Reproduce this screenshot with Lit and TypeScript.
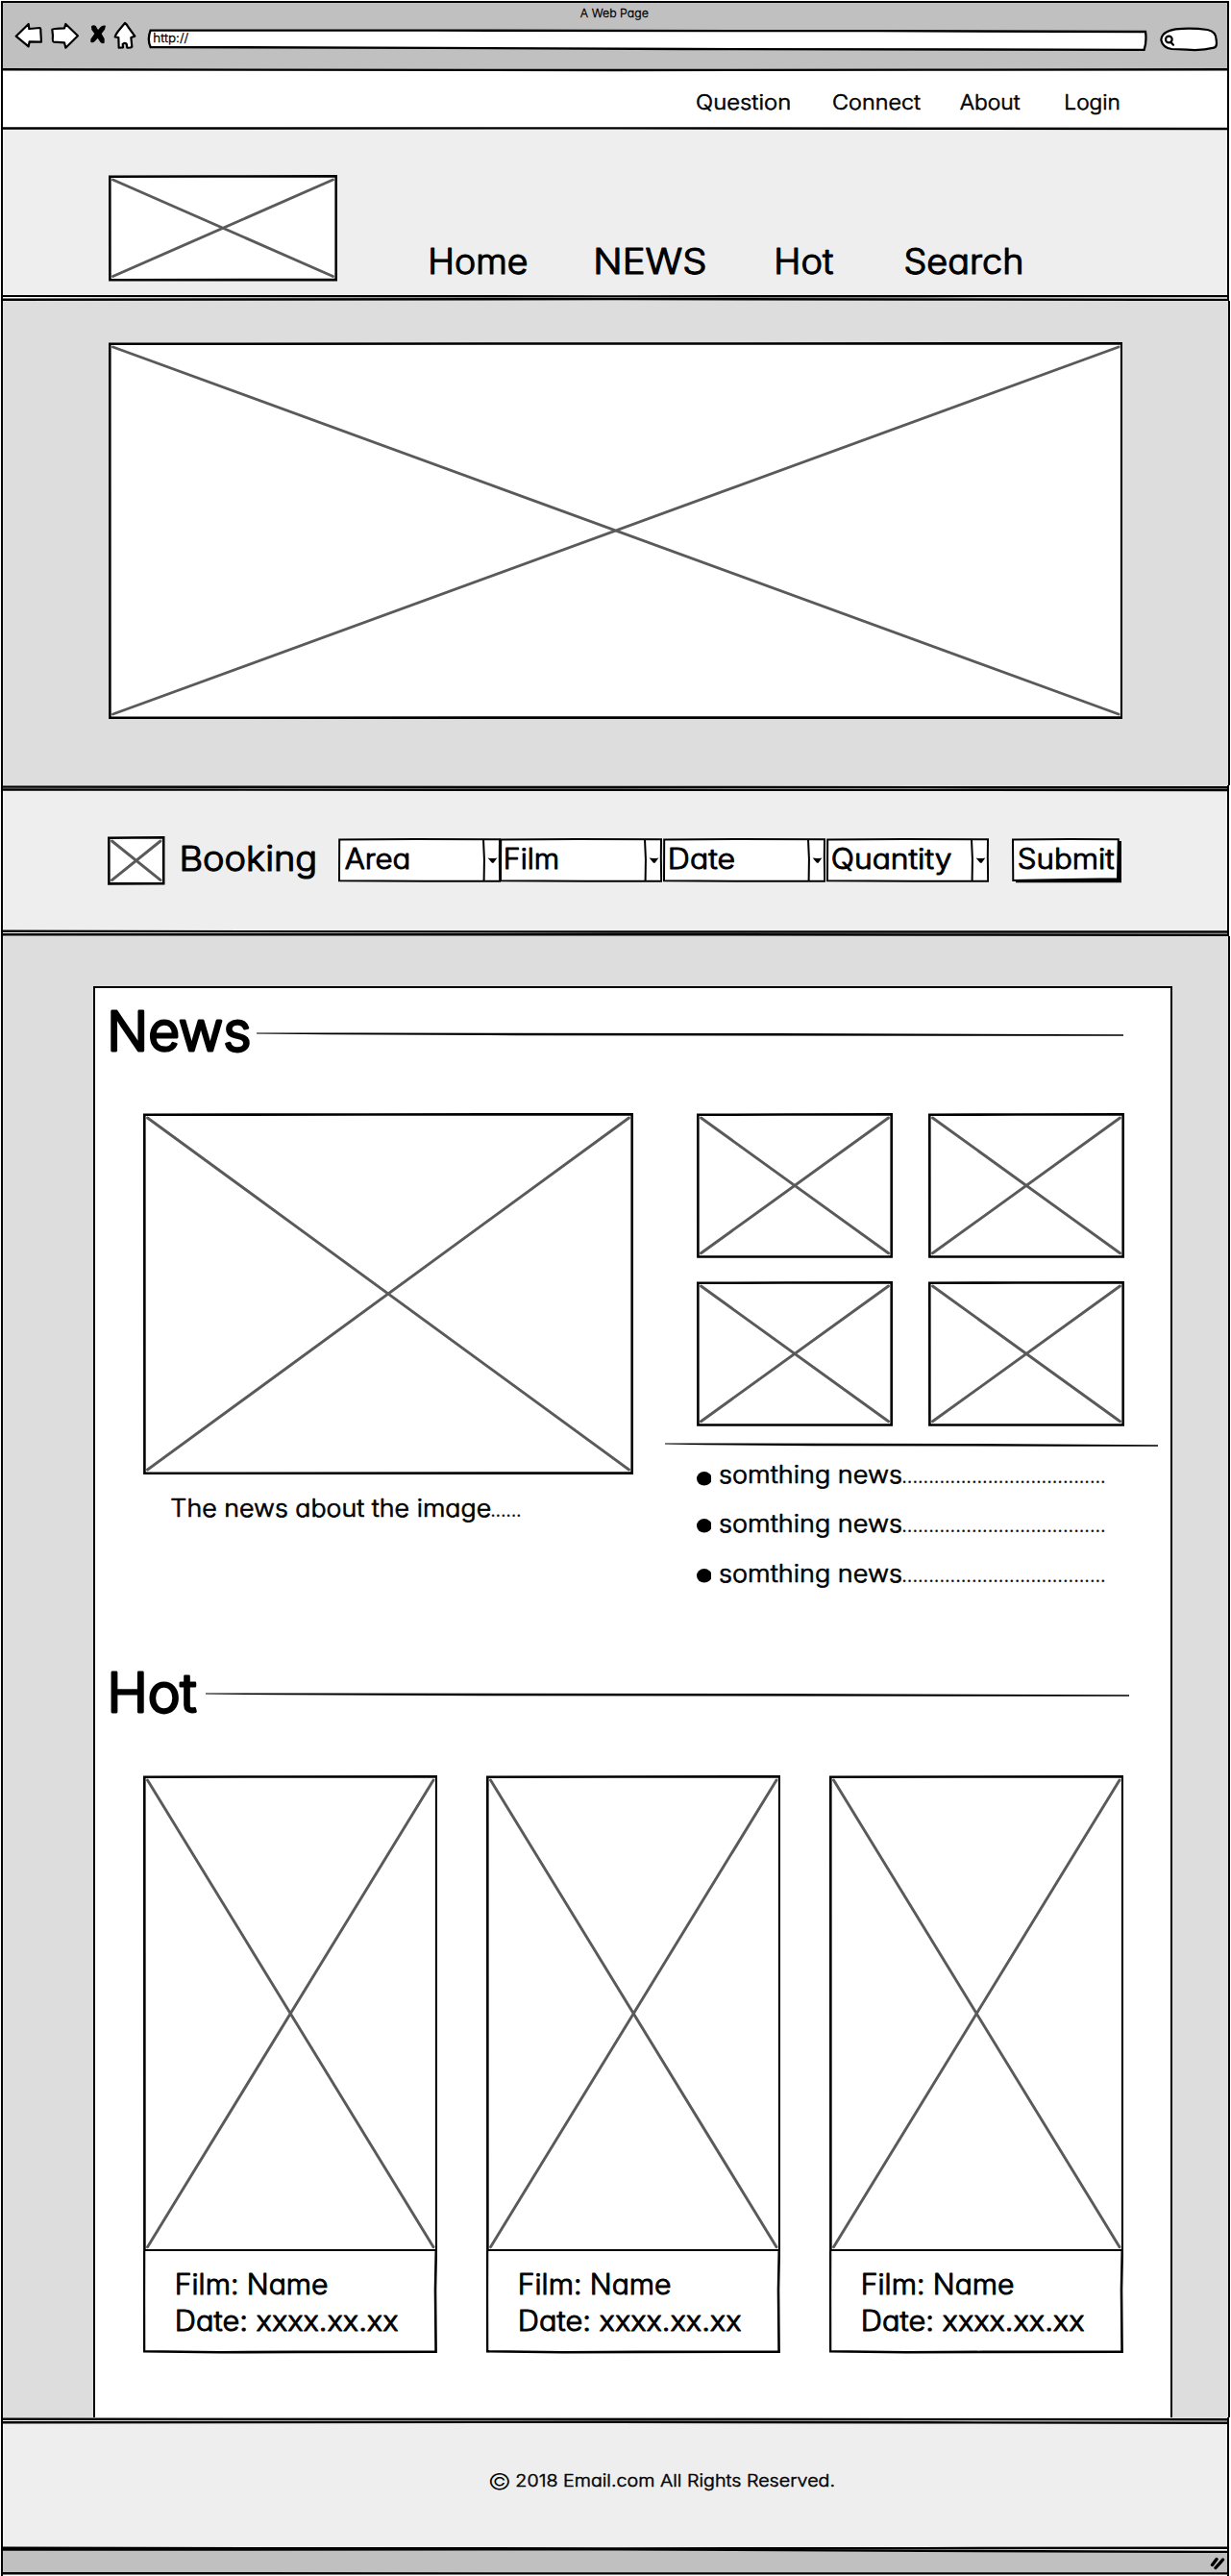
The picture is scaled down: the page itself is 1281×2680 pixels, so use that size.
import { LitElement, html, svg, css } from "lit";
import { customElement } from "lit/decorators.js";

/* Stroke added round the glyphs, as a share of the font size: heavier on larger text. */
const weightOf = (size: number) => (size > 50 ? 0.05 : size > 27 ? 0.034 : 0.028);

/* A label whose box is the ink box of its capitals: w wide, cap tall, baseline at the bottom. */
const label = (
  text: string,
  w: number,
  cap: number,
  lb = 0.08,
  rb = 0.06,
  dots = "",
  dotsWidth = 0,
) => {
  const ratio = text === "©" ? 0 : weightOf(cap / 0.755);
  const size = cap / (0.727 + ratio);
  const sw = size * ratio;
  const x = -lb * size + sw / 2;
  const len = w + (lb + rb) * size - sw;
  return html`<svg class="label" width=${w + dotsWidth} height=${cap}>
    <text
      x=${x}
      y=${cap - sw / 2}
      font-size=${size}
      stroke-width=${sw}
      textLength=${len}
      lengthAdjust="spacingAndGlyphs"
    >${text}</text>
    ${dots
      ? svg`<text x=${w} y=${cap - sw / 2} font-size=${size * 0.85} stroke-width="0.2"
          textLength=${dotsWidth} lengthAdjust="spacing">${dots}</text>`
      : null}
  </svg>`;
};

/* Crossed placeholder image with a slightly uneven hand-drawn outline. */
const photo = (w: number, h: number) => html`<svg class="photo" width=${w} height=${h}>
  <path
    class="outline"
    d="M1.3 1.8 L${w * 0.45} 1.5 L${w - 1.3} 1.3 L${w - 1.3} ${h - 1.4} L1.4 ${h - 1.3} Z"
  />
  <path class="cross" d="M4.5 5 L${w - 4.5} ${h - 5} M${w - 4.5} 5 L4.5 ${h - 5}" />
</svg>`;

/* Border between two bands: one or two strokes over the two band colours. */
const divider = (h: number, w: number, top: string, bottom: string, lines: number[][]) => {
  const last = lines[lines.length - 1][1];
  const d = (l: number[]) =>
    `M1 ${l[0]} L${w * 0.2} ${(l[0] + l[1]) / 2} L${w * 0.5} ${l[1]} L${w * 0.75} ${(l[1] + l[2]) / 2} L${w - 1} ${l[2]}`;
  return html`<svg class="divider" width=${w} height=${h}>
    <rect width=${w} height=${last} fill=${top} />
    <rect y=${last} width=${w} height=${h - last} fill=${bottom} />
    ${lines.length > 1
      ? svg`<path fill="#fff" d="${d(lines[0])} L${w - 1} ${lines[1][2]} L${w * 0.5} ${lines[1][1]} L1 ${lines[1][0]} Z" />`
      : null}
    ${lines.map((l) => svg`<path class="stroke" d=${d(l)} />`)}
    <path class="edge" d="M1 0 V${h} M${w - 1} 0 V${h}" />
  </svg>`;
};

const rule = (w: number) => html`<svg class="rule" width=${w} height="5">
  <path d="M0 0.6 L${w * 0.12} 0.6 L${w * 0.6} 1 L${w} 2.3 L${w} 3.7 L${w * 0.8} 3.8 L${w * 0.3} 3.2 L${w * 0.08} 2.3 L0 1.5 Z" />
</svg>`;

const fonts = css`
  .label {
    display: block;
    overflow: visible;
    flex: none;
  }
  .label text {
    font-family: Inter, "Open Sans", sans-serif;
    font-weight: 300;
    font-feature-settings: "cv11" 1;
    font-optical-sizing: none;
    fill: #000;
    stroke: #000;
    stroke-linejoin: round;
    white-space: pre;
  }
  svg {
    display: block;
    flex: none;
  }
  .outline {
    fill: #fff;
    stroke: #000;
    stroke-width: 2.6;
  }
  .cross {
    fill: none;
    stroke: #5a5a5a;
    stroke-width: 2.9;
    stroke-linecap: round;
  }
`;

@customElement("browser-bar")
export class BrowserBar extends LitElement {
  static styles = [
    fonts,
    css`
      :host {
        display: block;
      }
      .title {
        display: flex;
        justify-content: center;
        padding: 5.7px 2px 4.3px 0;
      }
      .bar {
        display: flex;
        height: 48px;
      }
      .ink {
        fill: #fff;
        stroke: #000;
        stroke-width: 6.6;
        stroke-linejoin: round;
        stroke-linecap: round;
      }
      .tools {
        display: flex;
        padding-left: 12px;
      }
      .fwd {
        margin-left: 6.67px;
      }
      .stop {
        margin-left: 10px;
      }
      .home {
        margin-left: 7.33px;
      }
      .address {
        margin-left: 10px;
        display: grid;
      }
      .address > * {
        grid-area: 1 / 1;
      }
      .url {
        padding: 13.3px 0 0 8.3px;
      }
      .search {
        margin-left: 12px;
      }
    `,
  ];
  render() {
    return html`
      <div class="title">${label("A Web Page", 70.3, 9, 0.03, 0.06)}</div>
      <div class="bar">
        <div class="tools">
          <svg width="30" height="30" viewBox="45 66 90 90">
            <path class="ink" d="M50 113 L89 75 L91 90 L124 87 Q128 88 127 98 L129 131 L92 130 L89 145 Z" />
          </svg>
          <svg class="fwd" width="31" height="30" viewBox="155 66 93 90">
            <path class="ink" d="M162 92 Q164 89 200 88 L204 75 L242 112 L204 149 L200 133 L167 131 Q162 130 164 112 Z" />
          </svg>
          <svg class="stop" width="18" height="30" viewBox="278 66 54 90">
            <path d="M284 82 Q291 76 298 81 L305 93 L314 83 Q320 79 329 80 L326 92 L316 105 L325 121 L325 134 Q317 138 312 131 L304 119 L295 129 Q288 136 282 131 L282 122 L294 105 L285 93 Z" />
          </svg>
          <svg class="home" width="24" height="30" viewBox="354 66 72 90">
            <path class="ink" d="M390 72 Q396 76 400 84 L421 113 L409 117 L412 146 Q408 150 397 149 L395 137 Q388 132 383 138 L384 148 L371 149 L370 117 L359 115 Q362 105 375 90 Z" />
          </svg>
        </div>
        <div class="address">
          <svg width="1042" height="32" viewBox="0 0 1042 32">
            <path
              d="M4.6 9.6 L300 9.7 L760 10.2 L1040 11 Q1041.5 21 1038.6 29.8 L560 29 L300 27.8 L4.6 27 Q1 19 4.6 9.6 Z"
              fill="#fff"
              stroke="#000"
              stroke-width="2.3"
            />
          </svg>
          <div class="url">${label("http://", 36.2, 9.4, 0.07, 0.02)}</div>
        </div>
        <svg class="search" width="64" height="30" viewBox="1038 66 192 90" overflow="visible">
          <path class="ink" d="M1045 125 Q1046 98 1090 91 Q1140 86 1190 93 Q1217 98 1217 125 Q1221 146 1210 149 Q1170 159 1125 155 L1078 153 Q1050 149 1045 125 Z" />
          <circle class="ink" cx="1069" cy="123" r="10" />
          <path class="ink" d="M1075 131 L1083 140" />
        </svg>
      </div>
    `;
  }
}

@customElement("booking-form")
export class BookingForm extends LitElement {
  static styles = [
    fonts,
    css`
      :host {
        display: flex;
        align-items: flex-start;
        padding: 46px 0 0 109.3px;
      }
      .name {
        padding: 9.8px 0 0 17.6px;
      }
      .fields {
        display: grid;
        grid-template-columns: 168.7px 169.7px 170px 169.5px;
        padding: 2px 0 0 23px;
      }
      .field {
        display: grid;
      }
      .field > * {
        grid-area: 1 / 1;
      }
      .text {
        padding: 10.3px 0 0 7.4px;
      }
      .text.wide {
        padding-left: 6px;
      }
      .line {
        fill: #fff;
        stroke: #000;
        stroke-width: 2;
      }
      .submit {
        display: grid;
        padding: 2px 0 0 23.7px;
      }
      .submit > * {
        grid-area: 1 / 1;
      }
      .caption {
        padding: 10.3px 0 0 6.3px;
      }
    `,
  ];
  private fields: [string, number, number, number][] = [
    ["Area", 66.5, 0.03, 0.08],
    ["Film", 54.6, 0.09, 0.07],
    ["Date", 67, 0.09, 0.05],
    ["Quantity", 124.3, 0.06, 0.02],
  ];
  render() {
    return html`
      ${photo(59.5, 50.7)}
      <div class="name">${label("Booking", 139.3, 27, 0.09, 0.07)}</div>
      <div class="fields">
        ${this.fields.map(
          ([t, w, lb, rb]) => html`<div class="field">
            <svg width="169" height="46">
              <path class="line" d="M1.2 1.4 L80 1 L168 1.3 L167.8 20 L168.2 44.8 L90 44.8 L1 44.2 Z" />
              <path class="line" d="M151 1.2 Q152.6 22 151.6 44.6" />
              <path d="M155.6 20.6 Q160 21.6 165.4 20.5 L161.6 25.8 L160 25.8 Z" />
            </svg>
            <div class="text ${t === "Quantity" || t === "Film" ? "wide" : ""}">
              ${label(t, w, 22.4, lb, rb)}
            </div>
          </div>`,
        )}
      </div>
      <div class="submit">
        <svg width="115" height="47">
          <path d="M4 6 L111 3 L114 3 L114 46.3 L4 46.3 Z" />
          <path class="line" d="M1 1.5 L60 1 L110.8 1.2 L110 42.2 L56 43 L1.3 44 Z" />
        </svg>
        <div class="caption">${label("Submit", 99, 22.4, 0.06, 0.04)}</div>
      </div>
    `;
  }
}

@customElement("news-section")
export class NewsSection extends LitElement {
  static styles = [
    fonts,
    css`
      :host {
        display: block;
        height: 688px;
      }
      .head {
        display: flex;
        padding: 23px 0 0 16px;
      }
      .head .rule {
        margin: 22.6px 0 0 6.7px;
      }
      .cols {
        display: flex;
        padding: 63.2px 0 0 49.5px;
      }
      .caption {
        padding: 25.5px 0 0 29.5px;
      }
      .side {
        padding-left: 33.5px;
      }
      .thumbs {
        display: grid;
        grid-template-columns: 204px 204px;
        gap: 24.3px 37.1px;
        padding-left: 32.8px;
      }
      .side .rule {
        margin-top: 17.4px;
      }
      .list {
        padding: 17.8px 0 0 32.5px;
        display: grid;
        grid-template-rows: 51px 52px 40px;
      }
      .row {
        display: flex;
        gap: 9.4px;
      }
      .bullet {
        margin-top: 7.5px;
      }
      .row + .row .bullet {
        margin-top: 5.2px;
      }
    `,
  ];
  render() {
    return html`
      <div class="head">${label("News", 145, 43.7, 0.09, 0.05)} ${rule(902.5)}</div>
      <div class="cols">
        <div>
          ${photo(510, 376)}
          <div class="caption">
            ${label("The news about the image", 332, 19.4, 0.04, 0.06, "......", 33)}
          </div>
        </div>
        <div class="side">
          <div class="thumbs">${[0, 1, 2, 3].map(() => photo(204, 150.8))}</div>
          ${rule(513.2)}
          <div class="list">
            ${[0, 1, 2].map(
              () => html`<div class="row">
                <svg class="bullet" width="15.6" height="14.6">
                  <ellipse cx="7.8" cy="7.3" rx="7.8" ry="7.3" />
                </svg>
                ${label("somthing news", 189, 19.4, 0.05, 0.05, ".".repeat(38), 213)}
              </div>`,
            )}
          </div>
        </div>
      </div>
    `;
  }
}

@customElement("hot-section")
export class HotSection extends LitElement {
  static styles = [
    fonts,
    css`
      :host {
        display: block;
      }
      .head {
        display: flex;
        padding: 22.9px 0 0 16px;
      }
      .head .rule {
        margin: 22.4px 0 0 10.4px;
      }
      .cards {
        display: flex;
        gap: 50.7px;
        padding: 64.9px 0 0 49.5px;
      }
      .info {
        display: grid;
        margin-top: -1px;
      }
      .info > * {
        grid-area: 1 / 1;
      }
      .lines {
        display: grid;
        gap: 15.9px;
        align-content: start;
        padding: 23.4px 0 0 35px;
      }
    `,
  ];
  render() {
    return html`
      <div class="head">${label("Hot", 88.8, 43.2, 0.09, 0.04)} ${rule(961)}</div>
      <div class="cards">
        ${[0, 1, 2].map(
          () => html`<div class="card">
            ${photo(306.5, 495.7)}
            <div class="info">
              <svg width="306" height="107">
                <path class="outline" d="M1 0 L0.9 50 L1 104.3 L80 105.2 L160 104.9 L304.6 104.6 L304 40 L304.8 0" />
              </svg>
              <div class="lines">
                ${label("Film: Name", 156.6, 22.4, 0.09, 0.05)}
                ${label("Date: xxxx.xx.xx", 230.4, 22.4, 0.09, 0.02)}
              </div>
            </div>
          </div>`,
        )}
      </div>
    `;
  }
}

@customElement("app-root")
export class AppRoot extends LitElement {
  static styles = [
    fonts,
    css`
      :host {
        display: block;
        width: 1281px;
        height: 2680px;
        background: #fff;
        overflow: hidden;
      }
      .divider {
        margin-left: 1px;
      }
      .divider .stroke {
        fill: none;
        stroke: #000;
        stroke-width: 2.4;
      }
      .divider .edge {
        fill: none;
        stroke: #000;
        stroke-width: 2;
      }
      .band {
        box-sizing: border-box;
        margin-left: 1px;
        border: solid #000;
        border-width: 0 2px;
        width: 1278px;
      }
      .band.wide {
        width: 1279px;
      }
      .chrome {
        height: 70px;
        margin-top: 1px;
        border-top-width: 2px;
        background: #c0c0c0;
      }
      .links {
        height: 57px;
        background: #fff;
      }
      .link-row {
        display: grid;
        grid-template-columns: 142.3px 132px 110px 56px;
        padding: 22.6px 0 0 722px;
      }
      .header {
        height: 171px;
        background: #eee;
        display: flex;
      }
      .logo {
        padding: 46.3px 0 0 109.7px;
      }
      .menu {
        display: grid;
        grid-template-columns: 172.3px 188.3px 134px 122px;
        padding: 122.2px 0 0 97px;
        align-content: start;
      }
      .hero {
        height: 504px;
        background: #ddd;
        padding: 43px 0 0 109.8px;
      }
      .booking {
        height: 143px;
        background: #eee;
      }
      .main {
        height: 1541px;
        background: #ddd;
        padding: 52px 0 0 94px;
      }
      .panel {
        box-sizing: border-box;
        width: 1122.7px;
        height: 1489px;
        background: #fff;
        border: 2px solid #000;
        border-bottom: 0;
      }
      .footer {
        height: 127px;
        background: #eee;
        display: flex;
        align-items: flex-start;
      }
      .copy {
        padding: 50.6px 0 0 506.4px;
      }
      .legal {
        padding: 52.3px 0 0 6px;
      }
      .status {
        height: 20px;
        background: #c0c0c0;
        display: flex;
        justify-content: flex-end;
      }
      .grip {
        fill: none;
        stroke: #000;
        stroke-linecap: round;
        stroke-width: 3.4;
      }
    `,
  ];
  render() {
    return html`
      <div class="band chrome"><browser-bar></browser-bar></div>
      ${divider(4, 1278, "#c0c0c0", "#fff", [[1.3, 2, 1.3]])}
      <div class="band links">
        <div class="link-row">
          ${label("Question", 97, 16.4, 0.06, 0.07)} ${label("Connect", 90.4, 16.4, 0.06, 0.04)}
          ${label("About", 62, 16.4, 0.03, 0.04)} ${label("Login", 55.7, 16.4, 0.09, 0.07)}
        </div>
      </div>
      ${divider(4, 1278, "#fff", "#eee", [[1.5, 1.4, 2]])}
      <div class="band header">
        <div class="logo">${photo(238, 110.5)}</div>
        <div class="menu">
          ${label("Home", 100.3, 27.6, 0.09, 0.05)} ${label("NEWS", 114.3, 27.6, 0.09, 0.05)}
          ${label("Hot", 58.4, 27.6, 0.09, 0.04)} ${label("Search", 121.5, 27.6, 0.06, 0.07)}
        </div>
      </div>
      ${divider(6, 1278, "#eee", "#ddd", [
        [0.9, 1.4, 1],
        [4.8, 4.1, 4.9],
      ])}
      <div class="band wide hero">${photo(1055.5, 392)}</div>
      ${divider(7, 1278, "#ddd", "#eee", [
        [1.6, 2, 2.3],
        [4.5, 4.8, 5],
      ])}
      <div class="band booking"><booking-form></booking-form></div>
      ${divider(7, 1278, "#eee", "#ddd", [
        [1.8, 2.5, 2.5],
        [5.3, 5.2, 5.7],
      ])}
      <div class="band wide main">
        <div class="panel">
          <news-section></news-section>
          <hot-section></hot-section>
        </div>
      </div>
      ${divider(7, 1278, "#ddd", "#eee", [
        [1.8, 2, 2.2],
        [5.2, 4.8, 5.8],
      ])}
      <div class="band footer">
        <div class="copy">${label("©", 21.5, 16.6, 0.06, 0.06)}</div>
        <div class="legal">
          ${label("2018 Email.com All Rights Reserved.", 331, 13.5, 0.05, 0.07)}
        </div>
      </div>
      ${divider(7, 1278, "#eee", "#c0c0c0", [
        [1.8, 2.4, 1.8],
        [3.5, 3.4, 6],
      ])}
      <div class="band status">
        <svg width="20" height="20">
          <path class="grip" d="M4.5 12.5 L9 6.5 M8 15.5 L15.5 7" />
        </svg>
      </div>
      ${divider(4, 1278, "#c0c0c0", "#fff", [[1.2, 1.4, 1.4]])}
    `;
  }
}
